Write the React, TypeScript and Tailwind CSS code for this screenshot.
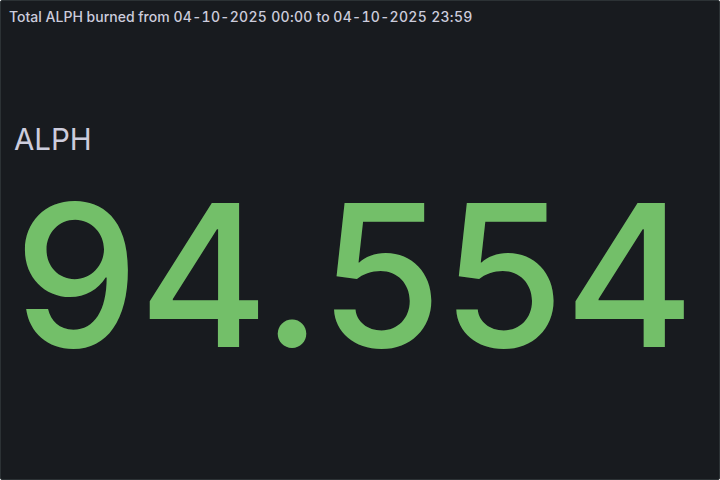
import React from 'react';

const App: React.FC = () => {
  return (
    <div
      className="w-[720px] h-[480px] bg-[#181b1f] border border-[#2c3235] rounded-[2px] flex flex-col overflow-hidden"
      style={{ fontFamily: 'Inter, "Noto Sans", sans-serif' }}
    >
      <div className="h-8 flex items-center px-2 shrink-0">
        <h2 className="text-[14px] font-medium text-[#ccccdc] leading-none tabular-nums whitespace-nowrap">
          Total ALPH burned from <span className="tracking-[0.3px]">04-10-2025 00:00</span> to{' '}
          <span className="tracking-[0.3px]">04-10-2025 23:59</span>
        </h2>
      </div>
      <div className="flex-1 flex flex-col px-[13px] pt-[92px]">
        <div className="text-[29.5px] leading-none text-[#ccccdc]">ALPH</div>
        <div className="text-[198px] leading-none font-medium text-[#73bf69] mt-[21px]">
          94.554
        </div>
      </div>
    </div>
  );
};

export default App;
